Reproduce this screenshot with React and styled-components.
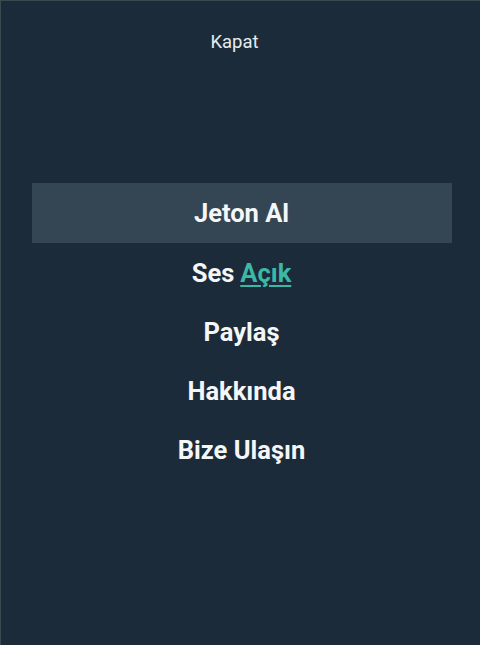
import React from "react";
import styled, { createGlobalStyle } from "styled-components";

const Global = createGlobalStyle`
  html, body { margin: 0; padding: 0; background: #1b2b3a; }
  body { font-family: Roboto, "Liberation Sans", sans-serif; }
`;

const Screen = styled.div`
  box-sizing: border-box;
  width: 480px;
  height: 645px;
  background: #1b2b3a;
  border-top: 1px solid #3b4a4f;
  border-left: 1px solid #3b4a4f;
  display: flex;
  flex-direction: column;
  align-items: center;
`;

const CloseButton = styled.div`
  margin-top: 31px;
  margin-right: 12px;
  font-size: 18.5px;
  color: #e6ebee;
  line-height: 20px;
  height: 20px;
`;

const Menu = styled.nav`
  margin-top: 131px;
  width: 420px;
  margin-left: 2px;
  display: flex;
  flex-direction: column;
`;

const Item = styled.div`
  height: ${(p) => (p.$active ? "60px" : "59px")};
  display: flex;
  align-items: center;
  justify-content: center;
  font-size: 25.5px;
  font-weight: 700;
  color: #f4f6f7;
  background: ${(p) => (p.$active ? "#344553" : "transparent")};
`;

const Toggle = styled.span`
  color: #3bb8a6;
  text-decoration: underline;
  text-underline-offset: 3px;
  text-decoration-thickness: 2px;
  margin-left: 6px;
`;

export default function App() {
  return (
    <>
      <Global />
      <Screen>
        <CloseButton>Kapat</CloseButton>
        <Menu>
          <Item $active>Jeton Al</Item>
          <Item>
            Ses<Toggle>Açık</Toggle>
          </Item>
          <Item>Paylaş</Item>
          <Item>Hakkında</Item>
          <Item>Bize Ulaşın</Item>
        </Menu>
      </Screen>
    </>
  );
}
